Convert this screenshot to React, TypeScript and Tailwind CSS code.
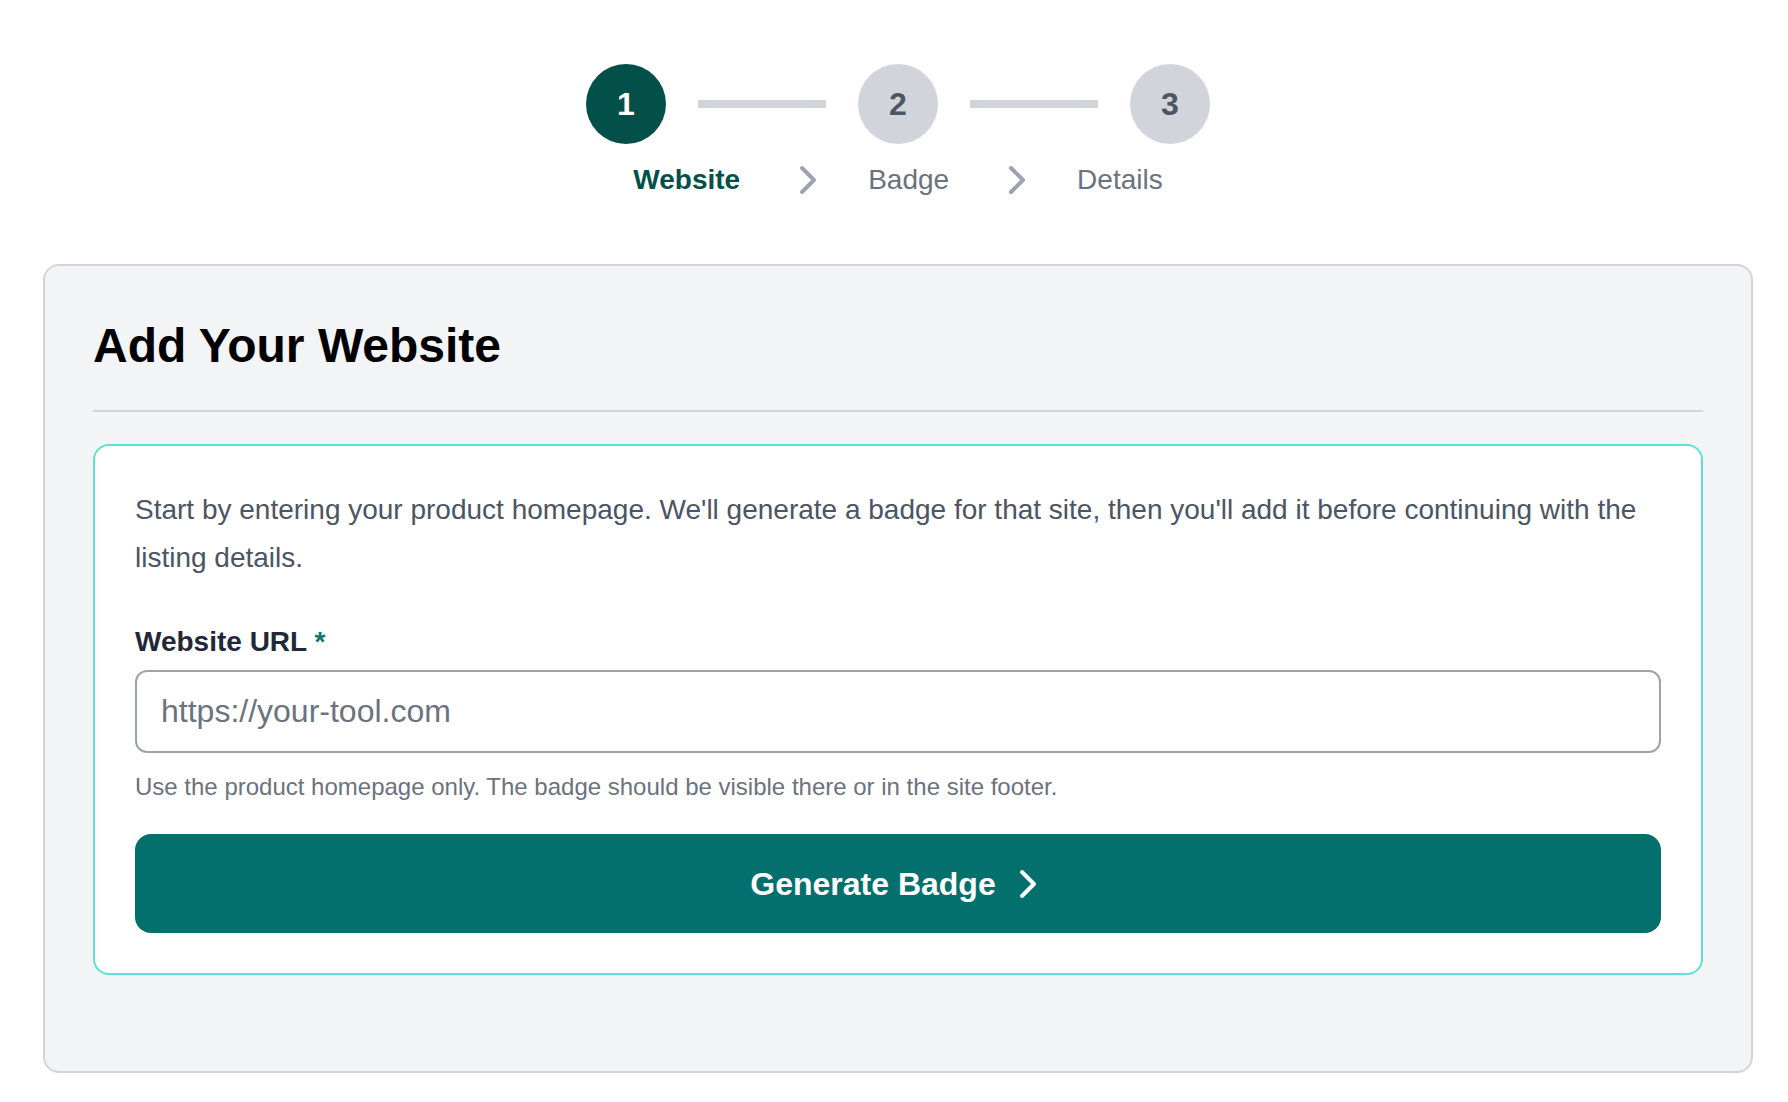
import { ChevronRight } from "lucide-react";

const steps = [
  { n: 1, label: "Website" },
  { n: 2, label: "Badge" },
  { n: 3, label: "Details" },
];

function Stepper({ current }: { current: number }) {
  return (
    <div className="flex flex-col items-center">
      <div className="flex items-center gap-8">
        {steps.map((s, i) => (
          <div key={s.n} className="flex items-center gap-8">
            <div
              className={
                s.n === current
                  ? "flex h-20 w-20 items-center justify-center rounded-full bg-[#034f4a] text-[32px] font-bold text-white"
                  : "flex h-20 w-20 items-center justify-center rounded-full bg-[#d1d5db] text-[32px] font-bold text-[#4b5563]"
              }
            >
              {s.n}
            </div>
            {i < steps.length - 1 && <div className="h-2 w-32 bg-[#d1d5db]" />}
          </div>
        ))}
      </div>
      <div className="mt-3 flex items-center gap-10 text-[28px] leading-10">
        {steps.map((s, i) => (
          <div key={s.n} className="flex items-center gap-10">
            <span
              className={
                s.n === current ? "font-bold text-[#034f4a]" : "text-[#6b7280]"
              }
            >
              {s.label}
            </span>
            {i < steps.length - 1 && (
              <ChevronRight size={48} strokeWidth={2} className="-mr-1 ml-1 text-[#9ca3af]" />
            )}
          </div>
        ))}
      </div>
    </div>
  );
}

export default function App() {
  return (
    <div
      className="min-h-screen bg-white pb-8 pl-[43px] pr-[35px] pt-16"
      style={{ fontFamily: '"Liberation Sans", Arial, sans-serif' }}
    >
      <Stepper current={1} />

      <div className="mt-[60px] rounded-2xl border-2 border-[#d1d5db] bg-[#f3f4f6] px-12 pb-24 pt-12">
        <h1 className="border-b-2 border-[#d1d5db] pb-8 text-[48px] font-bold leading-[64px] text-black">
          Add Your Website
        </h1>

        <div className="mt-8 rounded-2xl border-2 border-[#5ee0d9] bg-white p-10">
          <p className="text-[28px] leading-[48px] text-[#4b5563]">
            Start by entering your product homepage. We'll generate a badge for
            that site, then you'll add it before continuing with the listing
            details.
          </p>

          <label className="mt-10 block text-[28px] font-bold leading-10 text-[#1f2937]">
            Website URL <span className="text-[#0f766e]">*</span>
          </label>
          <input
            type="text"
            placeholder="https://your-tool.com"
            className="mt-2 block h-[83px] w-full rounded-xl border-2 border-[#9ca3af] bg-white px-6 text-[32px] text-[#111827] outline-none placeholder:text-[#6b7280]"
          />
          <p className="mt-4 text-[24px] leading-9 text-[#6b7280]">
            Use the product homepage only. The badge should be visible there or
            in the site footer.
          </p>

          <button className="mt-[29px] flex h-[99px] w-full items-center justify-center gap-2 rounded-2xl bg-[#03706d] pl-1.5 text-[32px] font-bold text-white">
            Generate Badge
            <ChevronRight size={48} strokeWidth={2} />
          </button>
        </div>
      </div>
    </div>
  );
}
